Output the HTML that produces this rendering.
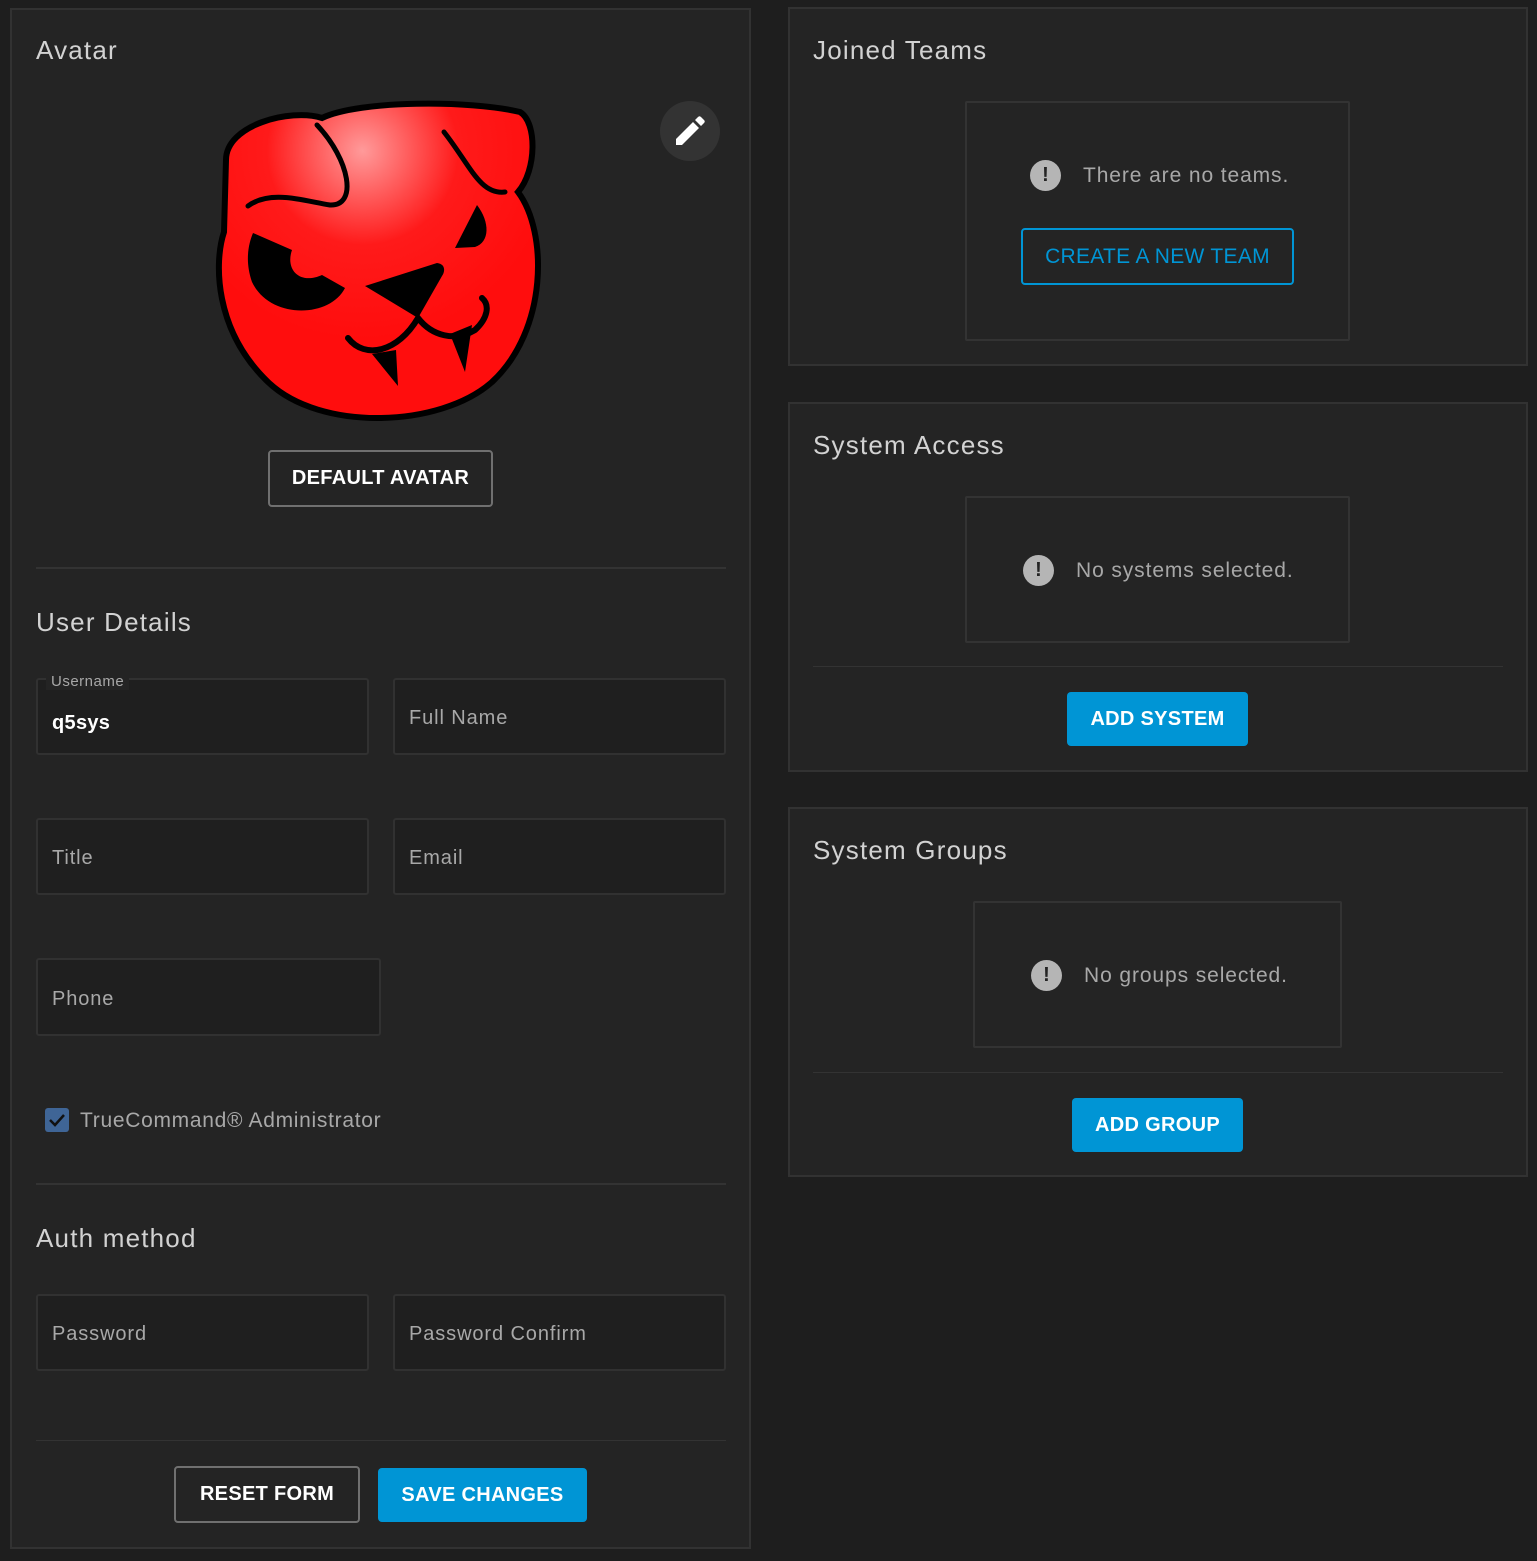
<!DOCTYPE html>
<html><head><meta charset="utf-8"><style>
*{box-sizing:border-box;margin:0;padding:0}
body{width:1537px;height:1561px;background:#1e1e1e;font-family:"Liberation Sans",sans-serif;position:relative;overflow:hidden;color:#d0d0d0}
.a{position:absolute}
.card{position:absolute;background:#242424;border:2px solid #323232}
.h{position:absolute;font-size:26px;color:#d2d2d2;letter-spacing:1.2px;margin-top:2px}
.hr{position:absolute;height:2px;background:#333}
.in{position:absolute;border:2px solid #313131;background:#1f1f1f;border-radius:3px;font-size:20px;color:#a8a8a8;padding-left:14px;padding-top:4px;display:flex;align-items:center;letter-spacing:0.9px}
.btn{position:absolute;border-radius:4px;font-size:20px;font-weight:bold;display:flex;align-items:center;justify-content:center;letter-spacing:0.3px}
.blue{background:#0095d5;color:#fff}
.out{border:2px solid #707070;color:#fff}
.box{position:absolute;border:2px solid #333;border-radius:2px}
.msg{position:absolute;font-size:21px;color:#a8a8a8;display:flex;align-items:center;letter-spacing:0.9px;margin-top:1px}
.ic{width:31px;height:31px;border-radius:50%;background:#b5b5b5;color:#242424;font-weight:bold;font-size:20px;display:flex;align-items:center;justify-content:center;margin-right:22px;letter-spacing:0}
</style></head><body>

<div class="card" style="left:10px;top:8px;width:741px;height:1541px"></div>
<div class="h" style="left:36px;top:33px">Avatar</div>

<svg class="a" style="left:0;top:0" width="760" height="440" viewBox="0 0 760 440">
<defs><radialGradient id="g" cx="0.45" cy="0.15" r="0.6"><stop offset="0" stop-color="#ff9a9a"/><stop offset="0.5" stop-color="#ff1a1a"/><stop offset="1" stop-color="#ff0d0d"/></radialGradient></defs>
<path d="M226,160 C226,125 290,108 322,118 C360,100 470,100 520,112 C537,122 537,170 518,192 C548,232 548,330 492,382 C440,428 320,432 268,382 C214,330 214,262 224,232 Z" fill="url(#g)" stroke="#000" stroke-width="6"/>
<path d="M248,206 C270,190 300,200 330,205 C358,206 350,160 317,125" fill="none" stroke="#000" stroke-width="5" stroke-linecap="round"/>
<path d="M444,132 C470,165 480,195 505,192" fill="none" stroke="#000" stroke-width="5" stroke-linecap="round"/>
<path d="M253,233 L292,250 C285,270 300,285 322,275 L345,288 C330,318 270,320 252,282 C245,262 248,245 253,233 Z"/>
<path d="M477,205 C490,222 490,242 475,247 L455,248 Z"/>
<path d="M365,286 L437,263 C446,264 445,272 442,276 L418,318 Z"/>
<path d="M348,338 C365,360 398,352 418,318 C432,336 455,342 475,330 C488,318 490,305 482,298" fill="none" stroke="#000" stroke-width="6" stroke-linecap="round"/>
<path d="M372,354 L398,386 L396,350 Z M450,334 L465,372 L472,325 Z"/>
<circle cx="690" cy="131" r="30" fill="#333"/>
<path d="M676,145 L676,139 L693,122 L699,128 L682,145 Z M695,120 L698,117 C699,116 700,116 701,117 L704,120 C705,121 705,122 704,123 L701,126 Z" fill="#fff"/>
</svg>

<div class="btn out" style="left:268px;top:450px;width:225px;height:57px">DEFAULT AVATAR</div>
<div class="hr" style="left:36px;top:567px;width:690px"></div>

<div class="h" style="left:36px;top:605px">User Details</div>
<div class="in" style="left:36px;top:678px;width:333px;height:77px;padding-top:14px;color:#fff;font-weight:bold;letter-spacing:0.3px">q5sys</div>
<div class="a" style="left:46px;top:673px;background:#242424;padding:0 5px;font-size:15px;color:#a8a8a8;letter-spacing:0.5px">Username</div>
<div class="in" style="left:393px;top:678px;width:333px;height:77px">Full Name</div>
<div class="in" style="left:36px;top:818px;width:333px;height:77px">Title</div>
<div class="in" style="left:393px;top:818px;width:333px;height:77px">Email</div>
<div class="in" style="left:36px;top:958px;width:345px;height:78px">Phone</div>

<div class="a" style="left:45px;top:1108px;width:24px;height:24px;background:#3f6596;border-radius:3px"></div>
<svg class="a" style="left:45px;top:1108px" width="24" height="24"><path d="M5,12 L10,17 L19,7" fill="none" stroke="#111" stroke-width="2.5"/></svg>
<div class="a" style="left:80px;top:1109px;font-size:21px;color:#a8a8a8;letter-spacing:0.7px">TrueCommand® Administrator</div>
<div class="hr" style="left:36px;top:1183px;width:690px"></div>

<div class="h" style="left:36px;top:1221px">Auth method</div>
<div class="in" style="left:36px;top:1294px;width:333px;height:77px">Password</div>
<div class="in" style="left:393px;top:1294px;width:333px;height:77px">Password Confirm</div>
<div class="hr" style="left:36px;top:1440px;width:690px;height:1px"></div>
<div class="btn out" style="left:174px;top:1466px;width:186px;height:57px">RESET FORM</div>
<div class="btn blue" style="left:378px;top:1468px;width:209px;height:54px">SAVE CHANGES</div>

<div class="card" style="left:788px;top:7px;width:740px;height:359px"></div>
<div class="h" style="left:813px;top:33px">Joined Teams</div>
<div class="box" style="left:965px;top:101px;width:385px;height:240px"></div>
<div class="msg" style="left:1030px;top:159px"><div class="ic">!</div>There are no teams.</div>
<div class="btn" style="left:1021px;top:228px;width:273px;height:57px;border:2px solid #0095d5;color:#0095d5;font-weight:normal;font-size:21px">CREATE A NEW TEAM</div>

<div class="card" style="left:788px;top:402px;width:740px;height:370px"></div>
<div class="h" style="left:813px;top:428px">System Access</div>
<div class="box" style="left:965px;top:496px;width:385px;height:147px"></div>
<div class="msg" style="left:1023px;top:554px"><div class="ic">!</div>No systems selected.</div>
<div class="hr" style="left:813px;top:666px;width:690px;height:1px"></div>
<div class="btn blue" style="left:1067px;top:692px;width:181px;height:54px">ADD SYSTEM</div>

<div class="card" style="left:788px;top:807px;width:740px;height:370px"></div>
<div class="h" style="left:813px;top:833px">System Groups</div>
<div class="box" style="left:973px;top:901px;width:369px;height:147px"></div>
<div class="msg" style="left:1031px;top:959px"><div class="ic">!</div>No groups selected.</div>
<div class="hr" style="left:813px;top:1072px;width:690px;height:1px"></div>
<div class="btn blue" style="left:1072px;top:1098px;width:171px;height:54px">ADD GROUP</div>

</body></html>
